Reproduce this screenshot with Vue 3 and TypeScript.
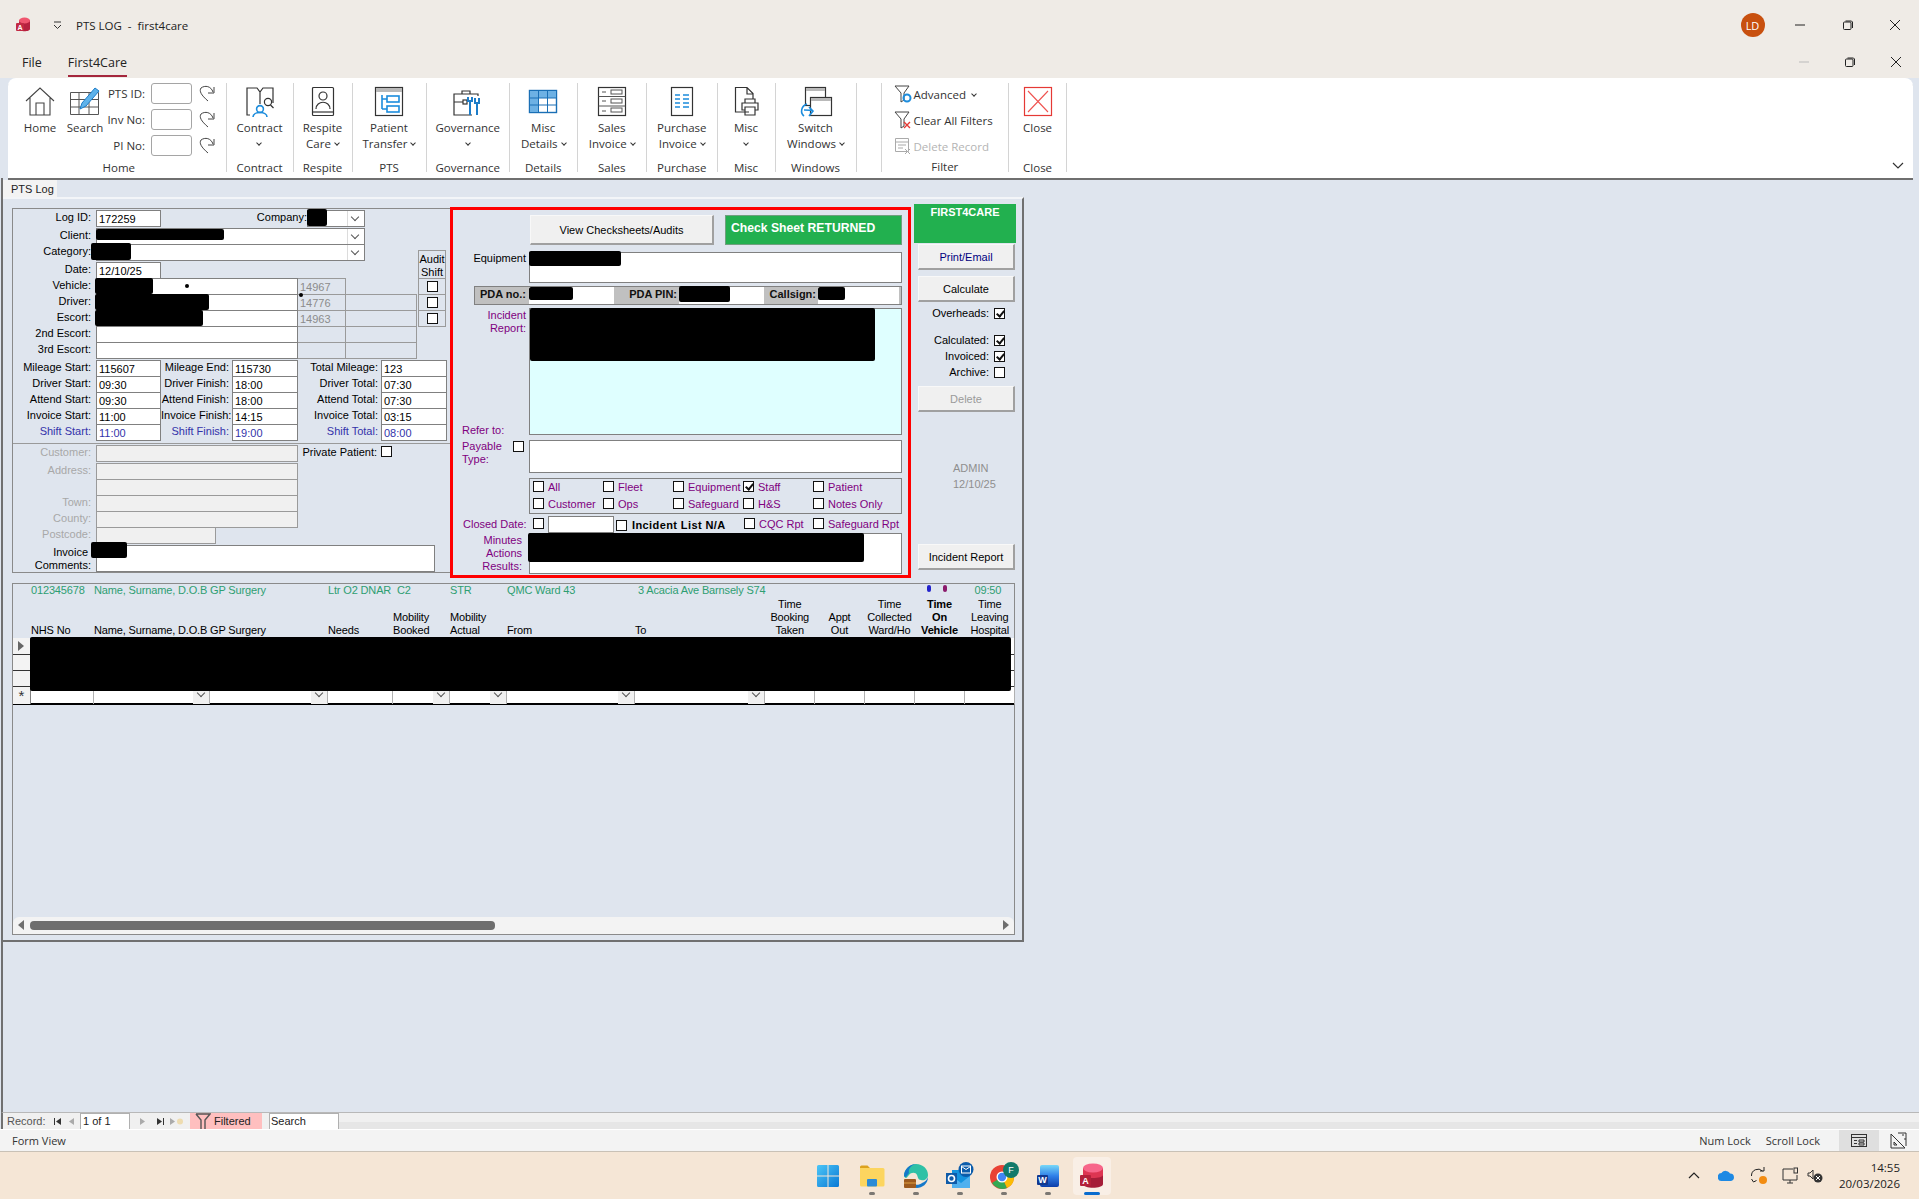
<script setup lang="ts">
// PTS Log form in the First4Care Access front end.
interface RibbonGroup {
  label: string;
  width: number;
  lines: string[];
  icon: string;
}

const ink = 'fill="none" stroke="#333" stroke-width="1.2"';
const blue = 'fill="none" stroke="#1c8cdc" stroke-width="1.6"';

const icons: Record<string, string> = {
  contract: `<path ${ink} stroke-width="2" d="M8 30H5V3h10l3 4 3-4h10v15M18 7v12"/><circle cx="18" cy="24" r="3.4" ${blue} stroke-width="2"/><path ${blue} stroke-width="2" d="M11 32c0-6 14-6 14 0"/><circle cx="26" cy="17" r="3.6" ${ink} stroke-width="1.8"/><path ${ink} stroke-width="2" d="M28.5 20l3 3"/>`,
  respite: `<rect x="7.5" y="2.5" width="21" height="28" rx="1" ${ink}/><path ${ink} d="M7.5 27h21"/><circle cx="18" cy="11" r="4" ${ink}/><path ${ink} d="M11 24c0-9 14-9 14 0"/>`,
  patient: `<rect x="4.5" y="2.5" width="27" height="28" ${ink}/><rect x="5" y="3" width="26" height="4" fill="#b9b9b9"/><path ${blue} stroke-width="1" d="M11 10v14M11 14h5M11 24h5"/><rect x="16" y="11" width="12" height="6" ${blue} stroke-width="1"/><rect x="16" y="21" width="12" height="6" ${blue} stroke-width="1"/>`,
  governance: `<path ${ink} d="M28 11V9H4v21h18M12 9V6h8v3M4 17h9"/><rect x="13" y="15" width="4" height="4" ${ink}/><path fill="none" stroke="#1c7cc8" stroke-width="2" d="M20 16v14M27 18v12"/><path fill="none" stroke="#1c7cc8" stroke-width="2" d="M25 13v5h4v-5M18 12v4h4v-4"/>`,
  details: `<rect x="4.5" y="5.5" width="27" height="22" fill="#fff" stroke="#1a6fb5" stroke-width="1.4"/><rect x="5" y="6" width="26" height="7" fill="#6db1e4"/><rect x="5" y="13" width="8.5" height="14" fill="#6db1e4"/><path fill="none" stroke="#1a6fb5" d="M13.5 6v21M22.5 6v21M5 13h26M5 20h26"/>`,
  sales: `<rect x="4.5" y="2.5" width="27" height="28" ${ink} stroke-width="1"/><path fill="none" stroke="#555" d="M4.5 11.5h27M4.5 21h27M8 7h4M8 16h4M8 26h4"/><rect x="17" y="5" width="11" height="4" fill="none" stroke="#555"/><rect x="17" y="14" width="11" height="4" fill="none" stroke="#555"/><rect x="17" y="23" width="11" height="4" fill="none" stroke="#555"/>`,
  purchase: `<rect x="7.5" y="2.5" width="21" height="28" ${ink}/><path fill="none" stroke="#1c8cdc" stroke-width="1.3" d="M11 10h5M19 10h6M11 14h5M19 14h6M11 18h5M19 18h6M11 22h5M19 22h6"/>`,
  misc: `<path ${ink} d="M21 27H7.5V2.500H19l6 6V14M19 2.500V9h6"/><path ${ink} d="M17 18v-4h10v4M17 25h-3v-7h16v7h-3M17 22h10v8H17z"/>`,
  windows: `<rect x="7.5" y="2.5" width="20" height="18" ${ink}/><rect x="8" y="3" width="19" height="3" fill="#b9b9b9"/><rect x="12.5" y="12.5" width="21" height="18" fill="#fff" stroke="#333" stroke-width="1.2"/><rect x="13" y="13" width="20" height="3" fill="#b9b9b9"/><path ${blue} d="M9 19c-6 2-7 9-3 12M6 25c4 0 7 0 9 1M11 22l4 4-4 5"/>`,
  close: `<rect x="4.5" y="2.5" width="27" height="28" fill="none" stroke="#e53935" stroke-width="1.2"/><path fill="none" stroke="#ef5350" stroke-width="1.1" d="M8 6l20 21M28 6L8 27"/>`,
};

const groups: RibbonGroup[] = [
  { label: "Contract", width: 67, lines: ["Contract"], icon: "contract" },
  { label: "Respite", width: 59, lines: ["Respite", "Care"], icon: "respite" },
  { label: "PTS", width: 74, lines: ["Patient", "Transfer"], icon: "patient" },
  { label: "Governance", width: 83.5, lines: ["Governance"], icon: "governance" },
  { label: "Details", width: 67.5, lines: ["Misc", "Details"], icon: "details" },
  { label: "Sales", width: 69.5, lines: ["Sales", "Invoice"], icon: "sales" },
  { label: "Purchase", width: 70.5, lines: ["Purchase", "Invoice"], icon: "purchase" },
  { label: "Misc", width: 58, lines: ["Misc"], icon: "misc" },
  { label: "Windows", width: 81, lines: ["Switch", "Windows"], icon: "windows" },
];

const lookups = ["PTS ID:", "Inv No:", "PI No:"];

const crew = [
  { label: "Vehicle:", num: "14967", mask: 58 },
  { label: "Driver:", num: "14776", mask: 114 },
  { label: "Escort:", num: "14963", mask: 108 },
  { label: "2nd Escort:", num: "", mask: 0 },
  { label: "3rd Escort:", num: "", mask: 0 },
];

const times = [
  { cells: [["Mileage Start:", "115607"], ["Mileage End:", "115730"], ["Total Mileage:", "123"]], blue: false },
  { cells: [["Driver Start:", "09:30"], ["Driver Finish:", "18:00"], ["Driver Total:", "07:30"]], blue: false },
  { cells: [["Attend Start:", "09:30"], ["Attend Finish:", "18:00"], ["Attend Total:", "07:30"]], blue: false },
  { cells: [["Invoice Start:", "11:00"], ["Invoice Finish:", "14:15"], ["Invoice Total:", "03:15"]], blue: false },
  { cells: [["Shift Start:", "11:00"], ["Shift Finish:", "19:00"], ["Shift Total:", "08:00"]], blue: true },
];

const address = [
  { label: "Address:", short: false },
  { label: "", short: false },
  { label: "Town:", short: false },
  { label: "County:", short: false },
  { label: "Postcode:", short: true },
];

const referTo = [
  { label: "All", on: false }, { label: "Fleet", on: false }, { label: "Equipment", on: false },
  { label: "Staff", on: true }, { label: "Patient", on: false },
  { label: "Customer", on: false }, { label: "Ops", on: false }, { label: "Safeguard", on: false },
  { label: "H&S", on: false }, { label: "Notes Only", on: false },
];

const flags = [
  { label: "Calculated:", on: true },
  { label: "Invoiced:", on: true },
  { label: "Archive:", on: false },
];

const columns = [
  { lines: ["NHS No"], combo: false, left: true },
  { lines: ["Name, Surname, D.O.B GP Surgery"], combo: true, left: true },
  { lines: [""], combo: true, left: true },
  { lines: ["Needs"], combo: false, left: true },
  { lines: ["Mobility", "Booked"], combo: true, left: true },
  { lines: ["Mobility", "Actual"], combo: true, left: true },
  { lines: ["From"], combo: true, left: true },
  { lines: ["To"], combo: true, left: true },
  { lines: ["Time", "Booking", "Taken"], combo: false, left: false },
  { lines: ["Appt", "Out"], combo: false, left: false },
  { lines: ["Time", "Collected", "Ward/Ho"], combo: false, left: false },
  { lines: ["Time", "On", "Vehicle"], combo: false, left: false, bold: true },
  { lines: ["Time", "Leaving", "Hospital"], combo: false, left: false },
];
</script>

<template>
  <div class="app">
    <header class="titlebar">
      <svg class="app-icon" width="16" height="16" viewBox="0 0 16 16">
        <path d="M4 3v9c0 3 11 3 11 0V3z" fill="#b7213f" />
        <ellipse cx="9.500" cy="3.500" rx="5.500" ry="3" fill="#f0566f" />
        <rect x="1" y="6" width="8" height="8" rx="1" fill="#c22a44" />
        <text x="5" y="12.500" font-size="7" font-weight="700" font-family="Liberation Sans, sans-serif" fill="#fff" text-anchor="middle">A</text>
      </svg>
      <svg class="qat" width="9" height="9" viewBox="0 0 9 9"><path d="M1 1h7M1 4l3.500 3.500L8 4" fill="none" stroke="#333" /></svg>
      <span class="doc-title">PTS LOG&nbsp; -&nbsp; first4care</span>
      <span class="avatar">LD</span>
      <span class="winbtn">
        <svg width="10" height="10" viewBox="0 0 10 10"><path d="M0 5h10" stroke="#222" /></svg>
      </span>
      <span class="winbtn">
        <svg width="10" height="10" viewBox="0 0 10 10"><rect x=".5" y="2" width="7.500" height="7.500" rx="1" fill="none" stroke="#222" /><path d="M2.500 1h6l1 1v6" fill="none" stroke="#222" /></svg>
      </span>
      <span class="winbtn">
        <svg width="10" height="10" viewBox="0 0 10 10"><path d="M0 0l10 10M10 0L0 10" stroke="#222" /></svg>
      </span>
    </header>

    <nav class="tabs">
      <span class="tab">File</span>
      <span class="tab active">First4Care</span>
      <div class="mdi">
        <span class="mdibtn"><svg width="10" height="10" viewBox="0 0 10 10"><path d="M0 5h10" stroke="#bbb" /></svg></span>
        <span class="mdibtn"><svg width="10" height="10" viewBox="0 0 10 10"><rect x=".5" y="2" width="7.500" height="7.500" rx="1" fill="none" stroke="#222" /><path d="M2.500 1h6l1 1v6" fill="none" stroke="#222" /></svg></span>
        <span class="mdibtn"><svg width="10" height="10" viewBox="0 0 10 10"><path d="M0 0l10 10M10 0L0 10" stroke="#222" /></svg></span>
      </div>
    </nav>

    <section class="ribbon">
      <div class="group home-group">
        <div class="home-body">
          <div class="large home-btn">
            <svg width="32" height="32" viewBox="0 0 32 32"><path d="M2 16L16 3l14 13M6 13v17h20V13M12 30V18h8v12" fill="none" stroke="#444" stroke-width="1.100" /></svg>
            <span class="r-line">Home</span>
          </div>
          <div class="large search-btn">
            <svg width="34" height="32" viewBox="0 0 34 32">
              <path d="M2.500 7.500h28v22h-28zM2.500 14.500h28M2.500 22h28M11 7.500v22M21 7.500v22" fill="none" stroke="#555" />
              <path d="M12 24l2-6L27 3l4 3-13 15z" fill="#5eb2ea" stroke="#1c7cc8" />
            </svg>
            <span class="r-line">Search</span>
          </div>
          <div class="lookups">
            <div v-for="name in lookups" :key="name" class="lookup">
              <span class="lookup-label">{{ name }}</span>
              <span class="lookup-box"></span>
              <svg width="16" height="19" viewBox="0 0 16 19"><path d="M15 3v6H9M14 8C12 2 6 1 2 4c-2 3 0 7 7 13" fill="none" stroke="#444" /></svg>
            </div>
          </div>
        </div>
        <span class="g-label">Home</span>
      </div>

      <div v-for="g in groups" :key="g.label" class="group" :style="{ width: g.width + 'px' }">
        <svg class="g-icon" width="36" height="32" viewBox="0 0 36 32" v-html="icons[g.icon]"></svg>
        <div class="g-text">
          <span v-for="(line, i) in g.lines" :key="line" class="r-line">
            {{ line }}<i v-if="g.lines.length === 2 && i === 1" class="chev"></i>
          </span>
          <span v-if="g.lines.length === 1" class="r-line"><i class="chev solo"></i></span>
        </div>
        <span class="g-label">{{ g.label }}</span>
      </div>

      <div class="group blank-group"></div>

      <div class="group filter-group">
        <div class="filter-rows">
          <div class="filter-row">
            <svg width="18" height="18" viewBox="0 0 18 18"><path d="M1 1h14l-5 7v7l-3 2V8z" fill="none" stroke="#444" /><circle cx="13" cy="13" r="3.500" fill="none" stroke="#1c8cdc" stroke-width="2" /></svg>
            <span>Advanced</span><i class="chev"></i>
          </div>
          <div class="filter-row">
            <svg width="18" height="18" viewBox="0 0 18 18"><path d="M1 1h14l-5 7v7l-3 2V8z" fill="none" stroke="#444" /><path d="M10 11l6 6M16 11l-6 6" stroke="#e53935" stroke-width="1.400" /></svg>
            <span>Clear All Filters</span>
          </div>
          <div class="filter-row off">
            <svg width="18" height="18" viewBox="0 0 18 18"><path d="M1.500 1.500h13v13h-13zM1.500 5h13M4 8h8M4 11h5" fill="none" stroke="#aaa" /><path d="M11 12l5 5M16 12l-5 5" stroke="#aaa" /></svg>
            <span>Delete Record</span>
          </div>
        </div>
        <span class="g-label">Filter</span>
      </div>

      <div class="group close-group">
        <svg class="g-icon" width="36" height="32" viewBox="0 0 36 32" v-html="icons.close"></svg>
        <div class="g-text"><span class="r-line">Close</span><span class="r-line"></span></div>
        <span class="g-label">Close</span>
      </div>

      <svg class="collapse" width="12" height="8" viewBox="0 0 12 8"><path d="M1 1l5 5 5-5" fill="none" stroke="#333" stroke-width="1.200" /></svg>
    </section>

    <main class="workspace">
      <div class="doc-tab">PTS Log</div>
      <div class="form-window">
        <div class="top-row">
          <section class="lpanel">
            <div class="upper">
              <div class="stack">
                <div class="row row-tall">
                  <span class="lbl">Log ID:</span>
                  <span class="field w64">172259</span>
                  <span class="lbl company-lbl">Company:</span>
                  <span class="field combo company"><b class="redact"></b></span>
                </div>
                <div class="row">
                  <span class="lbl">Client:</span>
                  <span class="field combo wide"><b class="redact mask-client"></b></span>
                </div>
                <div class="row row-tall">
                  <span class="lbl">Category:</span>
                  <span class="field combo wide"><b class="redact mask-category"></b></span>
                </div>
                <div class="row">
                  <span class="lbl">Date:</span>
                  <span class="field w64">12/10/25</span>
                </div>
                <div v-for="(c, i) in crew" :key="c.label" class="row">
                  <span class="lbl">{{ c.label }}</span>
                  <span class="field crew-main">
                    <b v-if="c.mask" class="redact mask-crew" :style="{ width: c.mask + 'px' }"></b>
                    <b v-if="i === 0" class="speck speck-a"></b>
                    <b v-if="i === 0" class="speck speck-b"></b>
                  </span>
                  <span class="crew-num">{{ c.num }}</span>
                  <span class="crew-spare" :class="{ open: i === 0 }"></span>
                </div>
              </div>
              <div class="audit">
                <div class="audit-head">Audit<br />Shift</div>
                <div v-for="n in 3" :key="n" class="audit-cell"><span class="cb"></span></div>
              </div>
            </div>

            <div class="times">
              <div v-for="t in times" :key="t.cells[0][0]" class="row" :class="{ shift: t.blue }">
                <span class="lbl">{{ t.cells[0][0] }}</span>
                <span class="field w64">{{ t.cells[0][1] }}</span>
                <span class="lbl lbl-mid">{{ t.cells[1][0] }}</span>
                <span class="field w65">{{ t.cells[1][1] }}</span>
                <span class="lbl lbl-end">{{ t.cells[2][0] }}</span>
                <span class="field w65">{{ t.cells[2][1] }}</span>
              </div>
            </div>

            <div class="divider"></div>

            <div class="row row-tall greyed">
              <span class="lbl">Customer:</span>
              <span class="field crew-main"></span>
              <span class="lbl lbl-private">Private Patient:</span>
              <span class="cb private-cb"></span>
            </div>
            <div v-for="a in address" :key="a.label" class="row greyed">
              <span class="lbl">{{ a.label }}</span>
              <span class="field" :class="a.short ? 'w120' : 'crew-main'"></span>
            </div>

            <div class="comments">
              <span class="comments-lbl"><span class="invoice-word">Invoice</span><br />Comments:</span>
              <span class="field comments-box"><b class="redact mask-comments"></b></span>
            </div>
          </section>

          <section class="redbox">
            <div class="r-buttons">
              <button class="btn view-btn">View Checksheets/Audits</button>
              <div class="returned">Check Sheet RETURNED</div>
            </div>

            <div class="r-row equip">
              <span class="r-lbl">Equipment</span>
              <span class="field r-field equip-box"><b class="redact mask-equip"></b></span>
            </div>

            <div class="pda">
              <span class="pda-lbl pda-no">PDA no.:</span>
              <span class="field pda-a"><b class="redact mask-a"></b></span>
              <span class="pda-lbl pda-pin">PDA PIN:</span>
              <span class="field pda-b"><b class="redact mask-b"></b></span>
              <span class="pda-lbl pda-call">Callsign:</span>
              <span class="field pda-c"><b class="redact mask-c"></b></span>
            </div>

            <div class="r-row incident">
              <div class="incident-labels">
                <span class="r-lbl purple">Incident<br />Report:</span>
                <span class="purple refer">Refer to:</span>
              </div>
              <div class="field r-field incident-box"><b class="redact mask-incident"></b></div>
            </div>

            <div class="r-row payable">
              <div class="payable-lbl">
                <span class="purple">Payable<br />Type:</span>
                <span class="cb payable-cb"></span>
              </div>
              <span class="field r-field payable-box"></span>
            </div>

            <div class="refer-grid">
              <label v-for="r in referTo" :key="r.label" class="refer-item purple">
                <span class="cb" :class="{ on: r.on }"></span>{{ r.label }}
              </label>
            </div>

            <div class="closed">
              <span class="purple closed-lbl">Closed Date:</span>
              <span class="cb closed-cb"></span>
              <span class="field closed-box"></span>
              <span class="cb list-cb"></span>
              <b class="list-lbl">Incident List N/A</b>
              <label class="closed-item purple cqc"><span class="cb"></span>CQC Rpt</label>
              <label class="closed-item purple"><span class="cb"></span>Safeguard Rpt</label>
            </div>

            <div class="r-row minutes">
              <span class="minutes-lbl purple">Minutes<br />Actions<br />Results:</span>
              <span class="field r-field minutes-box"><b class="redact mask-minutes"></b></span>
            </div>
          </section>

          <aside class="rcol">
            <div class="brand">FIRST4CARE</div>
            <button class="btn side print">Print/Email</button>
            <button class="btn side calc">Calculate</button>
            <div class="flag overheads"><span>Overheads:</span><span class="cb on"></span></div>
            <div class="flags">
              <div v-for="f in flags" :key="f.label" class="flag">
                <span>{{ f.label }}</span><span class="cb" :class="{ on: f.on }"></span>
              </div>
            </div>
            <button class="btn side del">Delete</button>
            <div class="admin">ADMIN<br />12/10/25</div>
            <button class="btn side report">Incident Report</button>
          </aside>
        </div>

        <section class="subform">
          <div class="cols strip">
            <span class="c-nhs">012345678</span>
            <span class="c-name">Name, Surname, D.O.B GP Surgery</span>
            <span class="c-needs">Ltr O2 DNAR&nbsp; C2</span>
            <span class="c-str">STR</span>
            <span class="c-from">QMC Ward 43</span>
            <span class="c-to">3 Acacia Ave Barnsely S74</span>
            <span class="c-dots"><i class="pin pin-a"></i><i class="pin pin-b"></i></span>
            <span class="c-time">09:50</span>
          </div>
          <div class="cols heads">
            <span></span>
            <span v-for="(col, i) in columns" :key="i" class="head" :class="{ centre: !col.left, strong: col.bold }">
              <span v-for="(line, j) in col.lines" :key="j">{{ line }}</span>
            </span>
          </div>
          <div class="sheet">
            <div v-for="n in 3" :key="n" class="cols data-row">
              <span class="selector"><i v-if="n === 1" class="tri"></i></span>
            </div>
            <div class="cols new-row">
              <span class="selector star">*</span>
              <span v-for="(col, i) in columns" :key="i" class="cell">
                <i v-if="col.combo" class="drop"></i>
              </span>
            </div>
            <div class="sheet-mask"></div>
          </div>
          <div class="hscroll">
            <i class="arrow-l"></i>
            <span class="thumb"></span>
            <i class="arrow-r"></i>
          </div>
        </section>
      </div>
    </main>

    <div class="navbar">
      <span class="rec">Record:</span>
      <svg class="nav-ico first" width="9" height="9" viewBox="0 0 9 9"><path d="M1.500 1v7" stroke="#333" /><path d="M8 1v7L3 4.500z" fill="#333" /></svg>
      <svg class="nav-ico prev" width="7" height="9" viewBox="0 0 7 9"><path d="M6 1v7L1 4.500z" fill="#aaa" /></svg>
      <span class="nav-input">1 of 1</span>
      <svg class="nav-ico next" width="7" height="9" viewBox="0 0 7 9"><path d="M1 1v7l5-3.500z" fill="#aaa" /></svg>
      <svg class="nav-ico last" width="9" height="9" viewBox="0 0 9 9"><path d="M7.500 1v7" stroke="#333" /><path d="M1 1v7l5-3.500z" fill="#333" /></svg>
      <svg class="nav-ico newrec" width="16" height="9" viewBox="0 0 16 9"><path d="M1 1v7l5-3.500z" fill="#aaa" /><circle cx="11" cy="4.500" r="3" fill="#eedcb0" /></svg>
      <span class="filtered">
        <svg width="16" height="16" viewBox="0 0 16 16"><path d="M1 1h14l-5 6v9M6 16V7L1 1" fill="none" stroke="#555" stroke-width="1.400" /></svg>
        Filtered
      </span>
      <span class="nav-search">Search</span>
      <span class="nav-track"></span>
    </div>

    <footer class="status">
      <span class="form-view">Form View</span>
      <span class="lock">Num Lock</span>
      <span class="lock">Scroll Lock</span>
      <span class="view-on">
        <svg width="16" height="14" viewBox="0 0 16 14"><rect x=".5" y=".5" width="15" height="12" fill="none" stroke="#333" /><path d="M1 3.500h14M3 6.500h3M8 6h5v2H8zM3 9.500h3M8 9h5v2H8z" fill="none" stroke="#333" /></svg>
      </span>
      <span class="view-off">
        <svg width="18" height="17" viewBox="0 0 18 17"><path d="M1 2l14 14H1zM4 10v3h3z" fill="none" stroke="#333" /><path d="M8 1h8v13" fill="none" stroke="#333" /><path d="M13 2v2M15 6v2" stroke="#333" /></svg>
      </span>
    </footer>

    <div class="taskbar">
      <div class="task-icons">
        <span class="task">
          <svg width="24" height="24" viewBox="0 0 24 24">
            <defs><linearGradient id="win" x1="0" y1="0" x2="1" y2="1"><stop offset="0" stop-color="#4cc6f7" /><stop offset="1" stop-color="#0a78d4" /></linearGradient></defs>
            <path d="M1 2.500A1.500 1.500 0 0 1 2.500 1H11.500V11.500H1zM12.500 1h9A1.500 1.500 0 0 1 23 2.500V11.500H12.500zM1 12.500H11.500V23H2.500A1.500 1.500 0 0 1 1 21.500zM12.500 12.500H23V21.500A1.500 1.500 0 0 1 21.500 23H12.500z" fill="url(#win)" />
          </svg>
        </span>
        <span class="task"><svg width="26" height="24" viewBox="0 0 26 24"><path d="M1 3a1.500 1.500 0 0 1 1.500-1.500h6L11 4H1z" fill="#dca21e" /><path d="M1 4h23a1.500 1.500 0 0 1 1.500 1.500V21a1.500 1.500 0 0 1-1.500 1.500H2.500A1.500 1.500 0 0 1 1 21z" fill="#fcd55f" /><rect x="8" y="15" width="10" height="7.500" rx="1" fill="#2b8bd6" /></svg><i class="pip"></i></span>
        <span class="task"><svg width="26" height="26" viewBox="0 0 26 26"><path d="M1 13C1 6 7 1 13 1c7 0 12 5 12 11 0 4-4 6-7 5-3 0-3-3-4-5-1-3-6-3-8 0-2 2-3 5-5 1z" fill="#2fc1a6" /><path d="M1 13C1 6 7 1 13 1 8 2 5 6 6 10c-2 2-3 6-5 3z" fill="#1578c9" /><path d="M25 14c0 7-6 11-11 11-6 0-9-3-10-7 4 4 12 5 15 2 3-1 5-3 6-6z" fill="#1578c9" /><rect x="1" y="16" width="12" height="9" rx="1" fill="#9c5a1e" /><path d="M1 20h12" stroke="#e0a145" /></svg><i class="pip"></i></span>
        <span class="task"><svg width="30" height="28" viewBox="0 0 30 28"><rect x="7" y="8" width="18" height="18" fill="#1493df" /><path d="M7 14l9 7 9-7v12H7z" fill="#50b0ee" /><rect x="1" y="11" width="11" height="11" fill="#0f5ba8" /><circle cx="6.500" cy="16.500" r="3" fill="none" stroke="#fff" stroke-width="1.600" /><circle cx="21" cy="7.500" r="7.500" fill="#0b5cab" /><rect x="16.500" y="4" width="9" height="7" fill="none" stroke="#fff" /><path d="M16.500 4.500l4.500 3 4.500-3" fill="none" stroke="#fff" /></svg><i class="pip"></i></span>
        <span class="task"><svg width="30" height="28" viewBox="0 0 30 28"><circle cx="13" cy="15" r="12" fill="#e94235" /><path d="M13 15L3 21a12 12 0 0 0 15 5z" fill="#34a853" /><path d="M13 15l5 11a12 12 0 0 0 7-11z" fill="#fbbc04" /><circle cx="13" cy="15" r="5.500" fill="#fff" /><circle cx="13" cy="15" r="4.200" fill="#4285f4" /><circle cx="22" cy="8" r="8" fill="#127a6a" /><text x="22" y="11" font-size="9" font-family="Liberation Sans, sans-serif" fill="#fff" text-anchor="middle">F</text></svg><i class="pip"></i></span>
        <span class="task"><svg width="24" height="24" viewBox="0 0 24 24"><defs><linearGradient id="wd" x1="0" y1="0" x2="0" y2="1"><stop offset="0" stop-color="#78d8f8" /><stop offset=".5" stop-color="#2f7fe8" /><stop offset="1" stop-color="#0c3da8" /></linearGradient></defs><rect x="4" y="1" width="19" height="22" rx="2" fill="url(#wd)" /><rect x="1" y="11" width="11" height="10" rx="1" fill="#11388f" /><text x="6.500" y="19" font-size="9" font-weight="700" font-family="Liberation Sans, sans-serif" fill="#fff" text-anchor="middle">W</text></svg><i class="pip"></i></span>
        <span class="task current"><svg width="24" height="26" viewBox="0 0 24 26"><path d="M3 5v16c0 5 20 5 20 0V5z" fill="#a51d38" /><path d="M3 12c0 4 20 4 20 0v-7H3z" fill="#dd3552" /><ellipse cx="13" cy="5" rx="10" ry="4.500" fill="#f7668a" /><rect x="0" y="12" width="11" height="11" rx="1" fill="#b3213a" /><text x="5.500" y="21" font-size="9" font-weight="700" font-family="Liberation Sans, sans-serif" fill="#fff" text-anchor="middle">A</text></svg><i class="pip-on"></i></span>
      </div>
      <div class="tray">
        <svg class="t-caret" width="12" height="7" viewBox="0 0 12 7"><path d="M1 6l5-5 5 5" fill="none" stroke="#222" stroke-width="1.200" /></svg>
        <svg class="t-cloud" width="17" height="11" viewBox="0 0 17 11"><path d="M4 11a4 4 0 0 1-.500-8A5 5 0 0 1 12 3.500 3.800 3.800 0 0 1 13 11z" fill="#1d89e4" /></svg>
        <svg class="t-sync" width="18" height="18" viewBox="0 0 18 18"><path d="M1.500 9a6.500 6.500 0 0 1 11-5M14 0v4h-4M1.500 12l2 3 3-1.500" fill="none" stroke="#222" /><circle cx="13" cy="13" r="4" fill="#f28c12" /></svg>
        <svg class="t-mon" width="18" height="18" viewBox="0 0 18 18"><path d="M11 2H1v11h14V8M5 16h6M8 13v3" fill="none" stroke="#333" /><rect x="12" y="1" width="3.500" height="5" fill="none" stroke="#333" /></svg>
        <svg class="t-vol" width="16" height="14" viewBox="0 0 16 14"><path d="M1 4h2l3-3v9L3 7H1z" fill="none" stroke="#333" /><circle cx="11" cy="9" r="4.500" fill="#333" /><path d="M9 7l4 4M13 7l-4 4" stroke="#fff" /></svg>
        <div class="clock"><span>14:55</span><span>20/03/2026</span></div>
      </div>
    </div>
  </div>
</template>

<style>
html,
body {
  margin: 0;
  background: #dfe5ee;
}
</style>

<style scoped>
.app {
  display: flex;
  flex-direction: column;
  width: 1919px;
  height: 1199px;
  overflow: hidden;
  font-family: "Liberation Sans", Arial, sans-serif;
  font-size: 11px;
  color: #000;
  background: #dfe5ee;
}

/* title + tabs */
.titlebar {
  display: flex;
  align-items: center;
  height: 50px;
  padding-left: 15px;
  background: #efebe6;
  font-family: "Open Sans", sans-serif;
  font-size: 11.500px;
  color: #222;
}
.qat {
  margin-left: 22px;
}
.doc-title {
  margin-left: 14px;
}
.avatar {
  display: flex;
  align-items: center;
  justify-content: center;
  width: 24px;
  height: 24px;
  margin-left: auto;
  margin-right: 12px;
  border-radius: 50%;
  background: #c8500f;
  color: #fff;
  font-size: 11px;
}
.winbtn {
  display: flex;
  align-items: center;
  justify-content: center;
  width: 47.500px;
  height: 46px;
}
.tabs {
  display: flex;
  align-items: flex-start;
  height: 28px;
  padding-left: 22px;
  background: #efebe6;
  font-family: "Open Sans", sans-serif;
  font-size: 12.500px;
  color: #222;
}
.tab {
  padding-top: 5px;
  height: 18px;
  line-height: 16px;
  margin-right: 26px;
}
.tab.active {
  height: 20px;
  border-bottom: 2px solid #a4263c;
}
.mdi {
  display: flex;
  margin-left: auto;
}
.mdibtn {
  display: flex;
  align-items: center;
  justify-content: center;
  width: 46px;
  height: 24px;
}

/* ribbon */
.ribbon {
  position: relative;
  display: flex;
  height: 100px;
  margin-left: 8px;
  margin-right: 6px;
  box-sizing: border-box;
  border-radius: 8px 8px 0 0;
  background: #fff;
  box-shadow: 0 2px 0 #6f6f6f;
  font-family: "Open Sans", sans-serif;
  font-size: 11.500px;
  color: #333;
}
.group {
  display: flex;
  flex-direction: column;
  align-items: center;
  box-sizing: border-box;
  height: 89px;
  margin-top: 5px;
  padding-top: 2px;
  border-right: 1px solid #d4d4d4;
}
.home-group {
  width: 218.500px;
}
.home-body {
  display: flex;
  align-self: stretch;
  height: 67px;
  padding-left: 16px;
}
.large {
  display: flex;
  flex-direction: column;
  align-items: center;
}
.home-btn {
  width: 32px;
}
.search-btn {
  width: 34px;
  margin-left: 12px;
}
.large .r-line {
  margin-top: 3px;
}
.lookups {
  display: flex;
  flex-direction: column;
  gap: 5px;
  margin-left: -5px;
  margin-top: -2px;
}
.lookup {
  display: flex;
  align-items: center;
  height: 21px;
}
.lookup-label {
  width: 48px;
  text-align: right;
}
.lookup-box {
  width: 41px;
  height: 21px;
  box-sizing: border-box;
  margin: 0 7px 0 6px;
  border: 1.500px solid #a5a5a5;
  border-radius: 3px;
}
.g-icon {
  flex: none;
}
.g-text {
  display: flex;
  flex-direction: column;
  align-items: center;
  height: 35px;
  margin-top: 3px;
}
.r-line {
  display: block;
  height: 16px;
  line-height: 16px;
  white-space: nowrap;
}
.g-label {
  display: block;
  height: 16px;
  margin-top: 8px;
  line-height: 16px;
  white-space: nowrap;
}
.home-group .g-label {
  margin-top: 8px;
  margin-left: 4px;
}
.chev {
  display: inline-block;
  width: 3px;
  height: 3px;
  margin-left: 4px;
  vertical-align: 3px;
  border-right: 1px solid #333;
  border-bottom: 1px solid #333;
  transform: rotate(45deg);
}
.chev.solo {
  margin-left: 0;
}
.blank-group {
  width: 25px;
}
.filter-group {
  width: 127.600px;
}
.filter-rows {
  display: flex;
  flex-direction: column;
  gap: 8px;
  align-self: stretch;
  height: 65px;
  padding-left: 12px;
}
.filter-row {
  display: flex;
  align-items: center;
  gap: 2px;
  height: 18px;
  white-space: nowrap;
}
.filter-row.off {
  color: #b4b4b4;
}
.filter-group .g-label {
  margin-top: 9px;
}
.close-group {
  width: 58px;
}
.collapse {
  position: absolute;
  right: 9px;
  bottom: 8px;
}

/* form area */
.workspace {
  flex: none;
  box-sizing: border-box;
  height: 934px;
  margin-left: 1px;
  padding-top: 2px;
  border-left: 2px solid #707070;
}
.doc-tab {
  box-sizing: border-box;
  width: 54px;
  height: 17px;
  padding-left: 8px;
  line-height: 18px;
  background: #f3f3f3;
  color: #222;
}
.form-window {
  box-sizing: border-box;
  width: 1021px;
  height: 745px;
  padding-left: 9px;
  border-top: 2px solid #f3f5f8;
  border-right: 2px solid #707070;
  border-bottom: 2px solid #707070;
}
.top-row {
  display: flex;
  box-sizing: border-box;
  height: 383.500px;
  padding-top: 9px;
  align-items: flex-start;
}
.row {
  display: flex;
  height: 16px;
}
.row-tall {
  height: 18px;
}
.lbl {
  flex: none;
  box-sizing: border-box;
  width: 83px;
  padding-right: 5px;
  text-align: right;
  line-height: 14px;
  white-space: nowrap;
}
.field {
  position: relative;
  flex: none;
  display: block;
  box-sizing: border-box;
  height: 17px;
  padding-left: 2px;
  line-height: 17px;
  border: 1px solid #808080;
  background: #fff;
  white-space: nowrap;
}
.redact {
  position: absolute;
  border-radius: 2px;
  background: #000;
}
.speck {
  position: absolute;
  width: 4px;
  height: 4px;
  border-radius: 50%;
  background: #000;
}
.speck-a {
  left: 88px;
  top: 5px;
}
.speck-b {
  left: 202px;
  top: 14px;
}
.w64 {
  width: 65px;
}
.w65 {
  width: 66px;
}
.w120 {
  width: 120px;
}
.wide {
  width: 269px;
}
.combo::before {
  content: "";
  position: absolute;
  right: 0;
  top: 0;
  bottom: 0;
  width: 16px;
  border-left: 1px solid #dcdcdc;
}
.combo::after {
  content: "";
  position: absolute;
  right: 6px;
  top: 3px;
  width: 5px;
  height: 5px;
  border-right: 1px solid #555;
  border-bottom: 1px solid #555;
  transform: rotate(45deg);
}
.company-lbl {
  width: 146px;
  padding-right: 0;
}
.company {
  width: 58px;
}
.company .redact {
  left: -1px;
  top: -2px;
  width: 20px;
  height: 17px;
}
.mask-client {
  left: -1px;
  top: 0;
  width: 128px;
  height: 11px;
}
.mask-category {
  left: -6px;
  top: -2px;
  width: 40px;
  height: 17px;
}
.lpanel {
  flex: none;
  box-sizing: border-box;
  width: 438px;
  height: 365px;
  padding-top: 1px;
  border: 1px solid #8a8a8a;
  border-right: 0;
}
.upper {
  display: flex;
}
.stack {
  width: 405px;
}
.crew-main {
  width: 202px;
}
.mask-crew {
  left: -2px;
  top: -1px;
  height: 16px;
}
.crew-num {
  box-sizing: border-box;
  width: 49px;
  height: 17px;
  padding-left: 2px;
  line-height: 17px;
  margin-left: -1px;
  border: 1px solid #9a9a9a;
  color: #8c8c8c;
}
.crew-spare {
  box-sizing: border-box;
  width: 72px;
  height: 17px;
  margin-left: -1px;
  border: 1px solid #9a9a9a;
}
.crew-spare.open {
  border-color: transparent;
  border-bottom-color: #9a9a9a;
}
.audit {
  width: 28px;
  margin-top: 40px;
}
.audit-head {
  box-sizing: border-box;
  height: 29px;
  padding-top: 2px;
  border: 1px solid #9a9a9a;
  text-align: center;
  line-height: 13px;
}
.audit-cell {
  display: flex;
  align-items: center;
  justify-content: center;
  box-sizing: border-box;
  height: 17px;
  margin-top: -1px;
  border: 1px solid #9a9a9a;
}
.cb {
  position: relative;
  flex: none;
  display: inline-block;
  box-sizing: border-box;
  width: 11px;
  height: 11px;
  border: 1px solid #111;
  background: #fff;
}
.cb.on::after {
  content: "";
  position: absolute;
  left: 2.500px;
  top: 0;
  width: 3px;
  height: 6px;
  border-right: 2px solid #111;
  border-bottom: 2px solid #111;
  transform: rotate(40deg);
}
.times {
  margin-top: 2px;
}
.lbl-mid {
  width: 71px;
  padding-right: 3px;
}
.lbl-end {
  width: 83px;
  padding-right: 3px;
}
.shift .lbl,
.shift .field {
  color: #3333aa;
}
.divider {
  height: 1px;
  margin-top: 3px;
  margin-bottom: 1px;
  background: #9a9a9a;
}
.greyed .lbl {
  color: #a8a8a8;
}
.greyed .field {
  background: #f0f0f0;
  border-color: #9a9a9a;
}
.greyed .lbl-private {
  width: 83px;
  padding-right: 4px;
  color: #000;
}
.private-cb {
  margin-top: 1px;
}
.comments {
  display: flex;
  margin-top: 2px;
}
.comments-lbl {
  box-sizing: border-box;
  width: 83px;
  padding-right: 5px;
  padding-top: 1px;
  line-height: 13px;
  text-align: right;
}
.invoice-word {
  padding-right: 3px;
}
.comments-box {
  width: 339px;
  height: 27px;
}
.mask-comments {
  left: -6px;
  top: -4px;
  width: 36px;
  height: 16px;
}

/* red framed block */
.redbox {
  flex: none;
  box-sizing: border-box;
  width: 461px;
  height: 371px;
  margin-top: -1px;
  padding-top: 5px;
  border: 3px solid #f00;
}
.purple {
  color: #800080;
}
.r-buttons {
  display: flex;
  gap: 11px;
  height: 30px;
  margin-left: 77px;
}
.btn {
  box-sizing: border-box;
  padding: 0;
  border: 1px solid #f8f8f8;
  border-right: 2px solid #a0a0a0;
  border-bottom: 2px solid #a0a0a0;
  background: #f0f0f0;
  font-family: inherit;
  font-size: 11px;
  color: #000;
}
.view-btn {
  width: 184px;
  height: 30px;
}
.returned {
  width: 177px;
  box-sizing: border-box;
  height: 30px;
  padding-left: 5px;
  line-height: 24px;
  background: #22b04f;
  border: 1px solid #6f9f7f;
  color: #fff;
  font-size: 12.200px;
  font-weight: 700;
  white-space: nowrap;
}
.r-row {
  display: flex;
}
.r-lbl {
  box-sizing: border-box;
  width: 73px;
  flex: none;
  text-align: right;
  line-height: 13px;
}
.r-field {
  margin-left: 3px;
  width: 373px;
}
.equip {
  margin-top: 7px;
}
.equip-box {
  height: 31px;
}
.mask-equip {
  left: -1px;
  top: -2px;
  width: 92px;
  height: 15px;
}
.pda {
  display: flex;
  box-sizing: border-box;
  width: 428px;
  height: 19px;
  margin-top: 3px;
  margin-left: 21px;
  border: 1px solid #808080;
  background: #c0c0c0;
}
.pda-lbl {
  flex: none;
  box-sizing: border-box;
  font-weight: 700;
  text-align: right;
  line-height: 15px;
  color: #111;
  white-space: nowrap;
}
.pda-no {
  width: 51px;
}
.pda-pin {
  width: 65px;
  padding-right: 2px;
}
.pda-call {
  width: 54px;
  padding-right: 2px;
}
.pda .field {
  height: 17px;
  border-width: 0;
}
.pda-a {
  width: 85px;
  margin-left: 3px;
}
.pda-b {
  width: 85px;
}
.pda-c {
  width: 81px;
}
.mask-a {
  left: 0;
  top: 0;
  width: 44px;
  height: 13px;
}
.mask-b {
  left: 0;
  top: -1px;
  width: 51px;
  height: 16px;
}
.mask-c {
  left: 0;
  top: 0;
  width: 27px;
  height: 13px;
}
.incident {
  margin-top: 3px;
}
.incident-labels {
  display: flex;
  flex-direction: column;
  justify-content: space-between;
  width: 73px;
}
.incident-labels .r-lbl {
  padding-top: 1px;
}
.refer {
  margin-bottom: -2px;
  padding-left: 9px;
  line-height: 13px;
  white-space: nowrap;
}
.incident-box {
  height: 127px;
  background: #dfffff;
}
.mask-incident {
  left: 0;
  top: -1px;
  width: 345px;
  height: 53px;
}
.payable {
  margin-top: 5px;
}
.payable-lbl {
  position: relative;
  box-sizing: border-box;
  width: 73px;
  padding-left: 9px;
  line-height: 13px;
}
.payable-cb {
  position: absolute;
  left: 60px;
  top: 1px;
}
.payable-box {
  height: 33px;
}
.refer-grid {
  display: grid;
  grid-template-columns: repeat(5, 70px);
  grid-auto-rows: 17px;
  box-sizing: border-box;
  width: 373px;
  height: 36px;
  margin-top: 5px;
  margin-left: 76px;
  padding-left: 3px;
  border: 1px solid #808080;
}
.refer-item {
  display: flex;
  align-items: center;
  white-space: nowrap;
  line-height: 17px;
}
.refer-item .cb,
.closed-item .cb {
  margin-right: 4px;
  margin-top: -2px;
}
.closed {
  display: flex;
  align-items: center;
  height: 18px;
  margin-top: 1px;
  white-space: nowrap;
}
.closed-lbl {
  box-sizing: border-box;
  width: 80px;
  padding-left: 10px;
}
.closed-box {
  width: 66px;
  margin-left: 4px;
}
.closed-cb {
  margin-top: -2px;
}
.list-cb {
  margin-left: 2px;
  margin-top: 2px;
}
.list-lbl {
  width: 106px;
  margin-left: 5px;
  margin-top: 2px;
  letter-spacing: 0.4px;
  color: #000;
}
.closed-item {
  display: flex;
  align-items: center;
  width: 69px;
}
.cqc {
  margin-left: 6px;
}
.minutes-lbl {
  box-sizing: border-box;
  width: 69px;
  padding-top: 1px;
  line-height: 13px;
  text-align: right;
}
.minutes .r-field {
  margin-left: 7px;
}
.minutes-box {
  height: 41px;
}
.mask-minutes {
  left: -2px;
  top: -1px;
  width: 336px;
  height: 29px;
}

/* right column */
.rcol {
  flex: none;
  display: flex;
  flex-direction: column;
  width: 102px;
  margin-left: 3px;
  margin-top: -4px;
}
.brand {
  box-sizing: border-box;
  height: 39px;
  background: #22b04f;
  color: #fff;
  font-weight: 700;
  text-align: center;
  line-height: 16px;
}
.side {
  flex: none;
  width: 97px;
  height: 26px;
  margin-left: 4px;
}
.print {
  margin-top: 1px;
  color: #000080;
}
.calc {
  margin-top: 6px;
}
.flag {
  display: flex;
  justify-content: flex-end;
  align-items: center;
  gap: 5px;
  height: 16px;
  padding-right: 11px;
  line-height: 16px;
}
.overheads {
  margin-top: 3px;
  margin-bottom: 11px;
}
.del {
  margin-top: 6px;
  color: #9a9a9a;
}
.admin {
  height: 84px;
  margin-top: 48px;
  padding-left: 39px;
  line-height: 16px;
  color: #8f8f8f;
}

/* subform */
.subform {
  position: relative;
  box-sizing: border-box;
  width: 1003px;
  height: 352.500px;
  border: 1px solid #8a8a8a;
}
.cols {
  display: grid;
  grid-template-columns: 18px 63px 116px 118px 65px 57px 57px 128px 130px 49.500px 50px 50px 50px 50.500px;
}
.strip {
  height: 14px;
  line-height: 12px;
  letter-spacing: -0.15px;
  color: #2e9e72;
  white-space: nowrap;
}
.c-nhs {
  grid-column: 2;
}
.c-name {
  grid-column: 3 / 5;
}
.c-needs {
  grid-column: 5 / 7;
}
.c-str {
  grid-column: 7;
}
.c-from {
  grid-column: 8;
}
.c-to {
  grid-column: 9;
  padding-left: 3px;
}
.c-dots {
  position: relative;
  grid-column: 13;
}
.c-time {
  grid-column: 14;
  padding-left: 10px;
}
.pin {
  position: absolute;
  top: 1px;
  width: 4px;
  height: 7px;
  border-radius: 2px;
}
.pin-a {
  left: 12px;
  background: #2222cc;
}
.pin-b {
  left: 28px;
  background: #8b1a6b;
}
.heads {
  position: relative;
  top: -6px;
  height: 38px;
  margin-top: 6px;
  line-height: 13px;
}
.heads > span:first-child {
  grid-column: 1;
}
.head {
  display: flex;
  flex-direction: column;
  justify-content: flex-end;
  letter-spacing: -0.15px;
  white-space: nowrap;
}
.head.centre {
  align-items: center;
  text-align: center;
}
.head.strong {
  font-weight: 700;
}
.sheet {
  position: relative;
  margin-top: -4px;
  border-bottom: 2px solid #000;
}
.data-row {
  box-sizing: border-box;
  height: 16px;
  border-bottom: 1px solid #333;
  background: #fff;
}
.data-row:first-child {
  height: 17px;
}
.new-row {
  height: 16px;
  background: #fff;
}
.selector {
  position: relative;
  display: block;
  border-right: 1px solid #808080;
  background: #f3f3f3;
}
.star {
  text-align: center;
  line-height: 17px;
  font-size: 15px;
  color: #333;
}
.tri {
  position: absolute;
  left: 5px;
  top: 3px;
  border-left: 6px solid #666;
  border-top: 5px solid transparent;
  border-bottom: 5px solid transparent;
}
.cell {
  position: relative;
  border-right: 1px solid #b0b0b0;
}
.drop {
  position: absolute;
  right: 0;
  top: 0;
  bottom: 0;
  width: 16px;
  background: #f0f0f0;
}
.drop::after {
  content: "";
  position: absolute;
  left: 5px;
  top: 3px;
  width: 5px;
  height: 5px;
  border-right: 1px solid #555;
  border-bottom: 1px solid #555;
  transform: rotate(45deg);
}
.sheet-mask {
  position: absolute;
  left: 17px;
  top: -1px;
  right: 3px;
  height: 54px;
  border-radius: 2px;
  background: #000;
}
.hscroll {
  position: absolute;
  left: 0;
  right: 0;
  bottom: 0;
  height: 17px;
  border-radius: 6px 6px 0 0;
  background: #f3f3f3;
}
.thumb {
  position: absolute;
  left: 17px;
  top: 4px;
  width: 465px;
  height: 9px;
  border-radius: 4px;
  background: #6e6e6e;
}
.arrow-l,
.arrow-r {
  position: absolute;
  top: 3px;
  border-top: 5px solid transparent;
  border-bottom: 5px solid transparent;
}
.arrow-l {
  left: 5px;
  border-right: 6px solid #6e6e6e;
}
.arrow-r {
  right: 5px;
  border-left: 6px solid #6e6e6e;
}

/* record nav + status */
.navbar {
  display: flex;
  flex: none;
  align-items: center;
  box-sizing: border-box;
  height: 17px;
  margin-left: 1px;
  padding-left: 1px;
  background: #f0f0f0;
  border-top: 1px solid #b8b8b8;
  border-left: 2px solid #707070;
  color: #555;
}
.rec {
  width: 42px;
  margin-left: 3px;
}
.nav-ico {
  flex: none;
}
.first {
  margin-left: 4px;
}
.prev {
  margin-left: 6px;
}
.nav-input {
  box-sizing: border-box;
  width: 50px;
  height: 16px;
  margin-left: 5px;
  padding-left: 2px;
  line-height: 15px;
  background: #fff;
  color: #222;
  border: 1px solid #b0b0b0;
  border-bottom: 0;
}
.next {
  margin-left: 9px;
}
.last {
  margin-left: 10px;
}
.newrec {
  margin-left: 4px;
}
.filtered {
  display: flex;
  align-items: center;
  gap: 3px;
  box-sizing: border-box;
  width: 72px;
  height: 16px;
  margin-left: 5px;
  padding-left: 5px;
  background: #ffbfbf;
  color: #222;
}
.nav-search {
  box-sizing: border-box;
  width: 70px;
  height: 16px;
  margin-left: 7px;
  padding-left: 1px;
  line-height: 15px;
  background: #fff;
  color: #222;
  border: 1px solid #b0b0b0;
  border-bottom: 0;
}
.nav-track {
  flex: 1;
  height: 7px;
  align-self: flex-end;
  background: #e6e6e6;
}
.status {
  display: flex;
  flex: none;
  align-items: center;
  box-sizing: border-box;
  height: 23px;
  padding-left: 12px;
  background: #f3f3f3;
  border-top: 1px solid #fff;
  border-bottom: 1px solid #c9c1b6;
  font-family: "Open Sans", sans-serif;
  font-size: 11px;
  color: #333;
}
.form-view {
  margin-right: auto;
}
.lock {
  margin-right: 15px;
}
.view-on {
  display: flex;
  align-items: center;
  justify-content: center;
  width: 40px;
  height: 21px;
  margin-left: 4px;
  background: #dfdfdf;
}
.view-off {
  display: flex;
  align-items: center;
  justify-content: center;
  width: 40px;
  height: 21px;
}

/* taskbar */
.taskbar {
  position: relative;
  display: flex;
  flex: none;
  height: 47px;
  background: #f5e6d6;
}
.task-icons {
  display: flex;
  margin-left: 806px;
  margin-top: 5px;
}
.task {
  position: relative;
  display: flex;
  align-items: center;
  justify-content: center;
  width: 44px;
  height: 38px;
}
.task.current {
  width: 38px;
  margin-left: 3px;
  border-radius: 4px;
  background: #f9efe6;
}
.pip {
  position: absolute;
  left: 19px;
  bottom: 0;
  width: 6px;
  height: 3px;
  border-radius: 2px;
  background: #7b7772;
}
.pip-on {
  position: absolute;
  left: 11px;
  bottom: 0;
  width: 16px;
  height: 3px;
  border-radius: 2px;
  background: #0a6cce;
}
.tray {
  display: flex;
  align-items: center;
  margin-left: auto;
  padding-right: 19px;
}
.t-cloud {
  margin-left: 18px;
}
.t-sync {
  margin-left: 15px;
}
.t-mon {
  margin-left: 14px;
}
.t-vol {
  margin-left: 7px;
}
.clock {
  display: flex;
  flex-direction: column;
  align-items: flex-end;
  margin-left: 16px;
  font-family: "Open Sans", sans-serif;
  font-size: 11.500px;
  line-height: 16px;
  color: #222;
}
</style>
